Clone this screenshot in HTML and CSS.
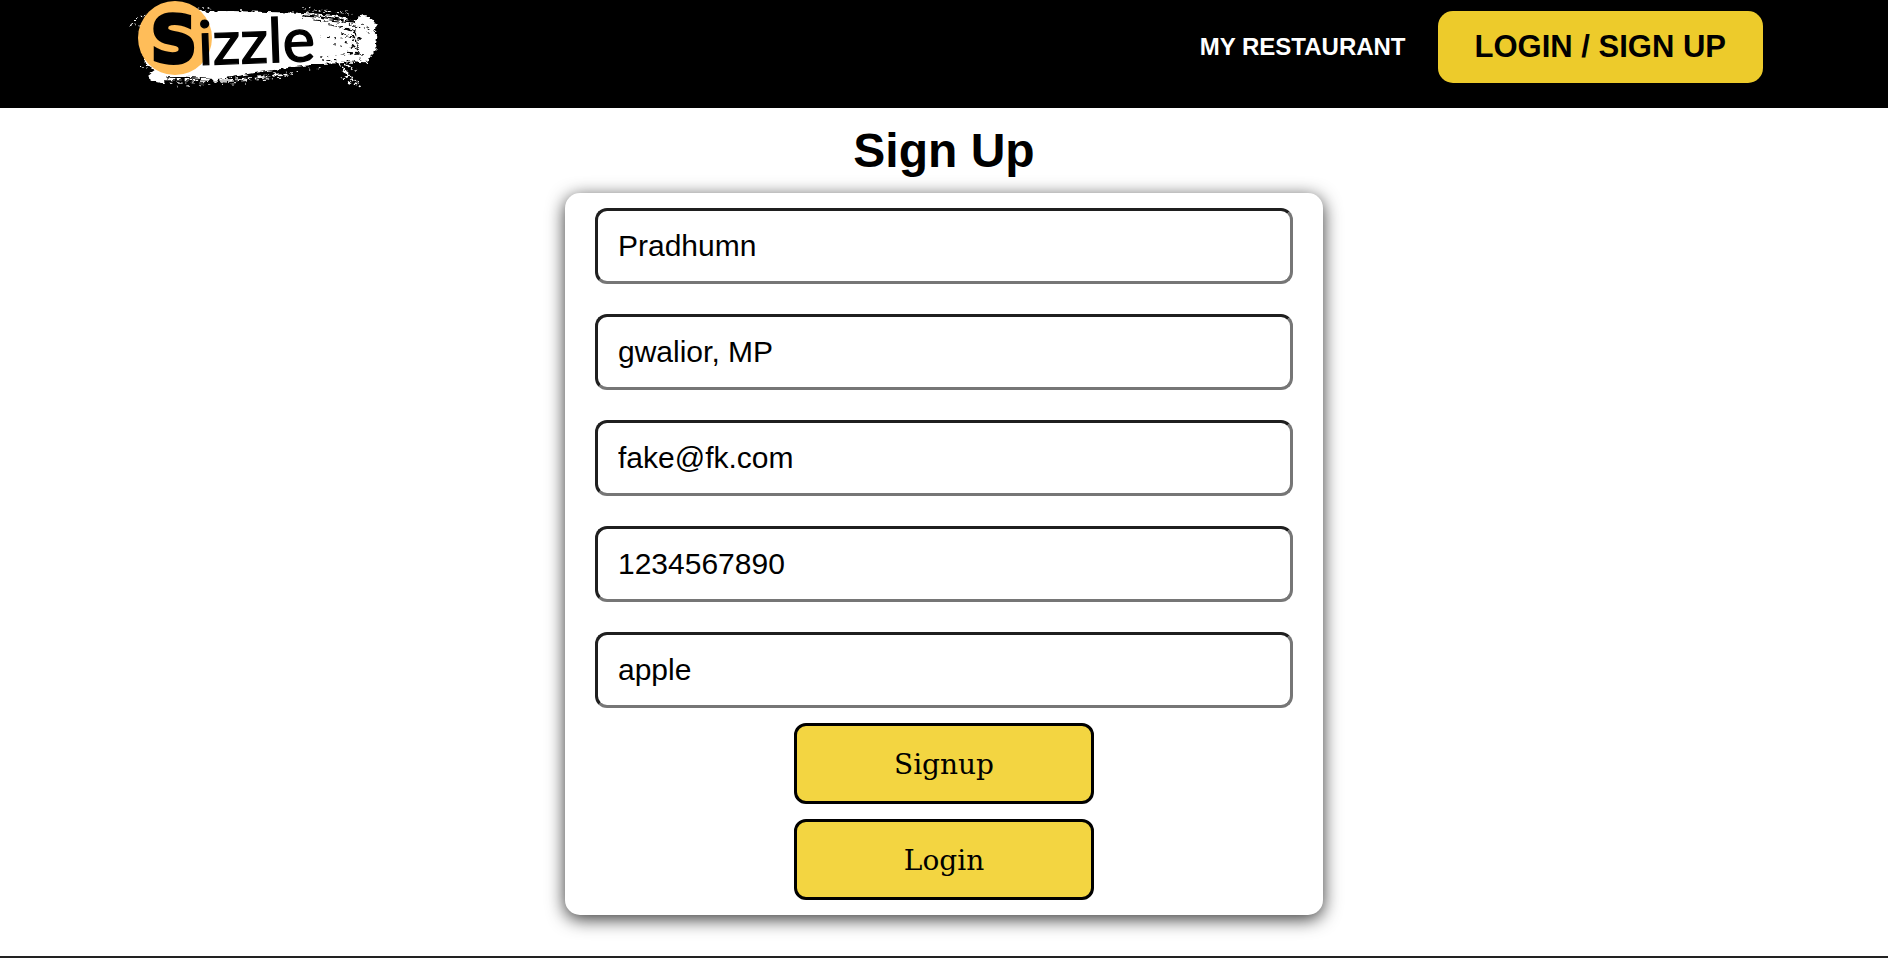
FILE: index.html
```html
<!DOCTYPE html>
<html lang="en">
<head>
<meta charset="utf-8">
<meta name="viewport" content="width=device-width, initial-scale=1">
<title>Sizzle - Sign Up</title>
<link rel="stylesheet" href="styles.css">
</head>
<body>
<header class="header">
  <a class="logo" href="#" aria-label="Sizzle">
    <svg class="logo-art" viewBox="0 0 810 270" role="img" aria-label="Sizzle">
      <defs>
        <filter id="rough" x="-5%" y="-10%" width="110%" height="120%">
          <feTurbulence type="fractalNoise" baseFrequency="0.05 0.12" numOctaves="3" seed="4" result="n"/>
          <feDisplacementMap in="SourceGraphic" in2="n" scale="15" xChannelSelector="R" yChannelSelector="G"/>
        </filter>
      </defs>
      <g filter="url(#rough)">
        <path fill="#fff" d="M75 70 L100 34 L225 24 L260 36 L330 33 L440 36 L540 38 L640 44 L700 62 L724 46 L752 52 L770 76 L760 92 L774 106 L768 130 L770 148 L754 164 L744 190 L690 188 L600 192 L520 202 L420 216 L340 230 L290 238 L200 230 L140 232 L130 250 L92 242 L88 222 L104 210 L74 190 Z"/>
        <g fill="none" stroke="#fff">
          <path stroke-width="5" stroke-dasharray="30 5 12 9 44 7" d="M135 238 L330 240 L520 222"/>
          <path stroke-width="3" stroke-dasharray="7 12 19 8 3 16" d="M150 250 L300 247 L480 235"/>
          <path stroke-width="3" stroke-dasharray="3 26 8 31" d="M170 259 L400 249 M430 226 L620 200"/>
          <path stroke-width="4" stroke-dasharray="6 10 4 9" d="M30 74 L70 78 M48 56 L84 42 M54 90 L76 94 M62 198 L80 204"/>
          <path stroke-width="5" stroke-dasharray="13 6 7 9" d="M656 190 L680 216 L715 252 M678 192 L712 216 M690 228 L664 236 M684 245 L722 260 M670 210 L700 242"/>
          <path stroke-width="3" stroke-dasharray="8 9 4 12" d="M550 26 L705 44 M560 33 L690 36 M230 24 L275 27"/>
        </g>
        <g fill="none" stroke="#000">
          <path stroke-width="7" stroke-dasharray="48 4 24 3" d="M548 46 L600 50 L708 66"/>
          <path stroke-width="3" stroke-dasharray="26 5 14 9" d="M580 60 L660 66 L724 84 M625 74 L710 92"/>
          <path stroke-width="6" stroke-dasharray="15 7 8 10" d="M678 86 L712 100 M694 108 L724 118 M694 134 L714 144 M684 158 L728 164"/>
          <path stroke-width="4" stroke-dasharray="9 9 12 8" d="M664 98 L716 130 M676 124 L716 156 M724 68 L755 92 M706 98 L720 176 M604 180 L740 184"/>
          <path stroke-width="3" stroke-dasharray="5 13 8 17" d="M604 172 L700 162 M600 112 L690 114 M640 134 L700 146 M730 82 L752 106"/>
        </g>
      </g>
      <circle cx="165" cy="114" r="111" fill="#ffbd59"/>
      <text class="logo-initial" x="92" y="187">S</text>
      <text class="logo-rest" x="236" y="195" transform="rotate(-2 236 195)">izzle</text>
    </svg>
  </a>
  <nav class="nav">
    <a class="nav-link" href="#">MY RESTAURANT</a>
    <button class="nav-button" type="button">LOGIN / SIGN UP</button>
  </nav>
</header>
<main class="main">
  <h1 class="title">Sign Up</h1>
  <form class="card">
    <div class="fields">
      <input class="field" type="text" aria-label="Name" value="Pradhumn">
      <input class="field" type="text" aria-label="Address" value="gwalior, MP">
      <input class="field" type="text" aria-label="Email" value="fake@fk.com">
      <input class="field" type="text" aria-label="Phone" value="1234567890">
      <input class="field" type="text" aria-label="Password" value="apple">
    </div>
    <button class="action" type="button">Signup</button>
    <button class="action" type="button">Login</button>
  </form>
</main>
<footer class="footer"></footer>
</body>
</html>
```
FILE: styles.css
```css
* {
  box-sizing: border-box;
}

body {
  margin: 0;
  min-height: 100vh;
  display: flex;
  flex-direction: column;
  background: #fff;
  color: #000;
  font-family: Arial, "Liberation Sans", sans-serif;
}

.header {
  display: flex;
  justify-content: space-between;
  align-items: flex-start;
  padding: 0 125px 18px 120px;
  background: #000;
}

.logo,
.logo-art {
  display: block;
}

.logo-art {
  width: 270px;
  height: 90px;
}

.logo-initial {
  font-family: "DejaVu Sans", sans-serif;
  font-size: 192px;
  font-weight: 700;
  stroke: #000;
  stroke-width: 12px;
}

.logo-rest {
  font-family: Lato, sans-serif;
  font-size: 184px;
  font-weight: 400;
  stroke: #000;
  stroke-width: 4px;
}

.nav {
  display: flex;
  align-items: center;
  gap: 32px;
  padding-top: 11px;
}

.nav-link {
  color: #fff;
  font-size: 24px;
  font-weight: 700;
  text-decoration: none;
}

.nav-button {
  padding: 18px 37px;
  border: 0;
  border-radius: 15px;
  background: #edcb2b;
  color: #000;
  font: 700 31px/36px Arial, "Liberation Sans", sans-serif;
}

.main {
  flex: 1;
  display: flex;
  flex-direction: column;
  align-items: center;
  padding: 15px 20px 41px;
}

.title {
  margin: 0 0 15px;
  font-size: 48px;
  line-height: 55px;
}

.card {
  display: flex;
  flex-direction: column;
  align-items: center;
  gap: 15px;
  width: 100%;
  max-width: 758px;
  padding: 15px 30px;
  border-radius: 15px;
  background: #fff;
  box-shadow: 0 4px 18px rgba(0, 0, 0, 0.8);
}

.fields {
  display: flex;
  flex-direction: column;
  gap: 30px;
  width: 100%;
}

.field {
  width: 100%;
  height: 76px;
  padding: 0 20px;
  border: 3px solid;
  border-color: #1f1f1f #767676 #767676 #1f1f1f;
  border-radius: 12px;
  background: #fff;
  color: #000;
  font: 30px Arial, "Liberation Sans", sans-serif;
}

.action {
  width: 300px;
  max-width: 100%;
  padding: 20px 20px 18px;
  border: 3px solid #000;
  border-radius: 12px;
  background: #f3d541;
  color: #000;
  font: 28px/37px "Roboto Slab", "DejaVu Serif", serif;
}

.footer {
  height: 2px;
  background: #222;
}
```
